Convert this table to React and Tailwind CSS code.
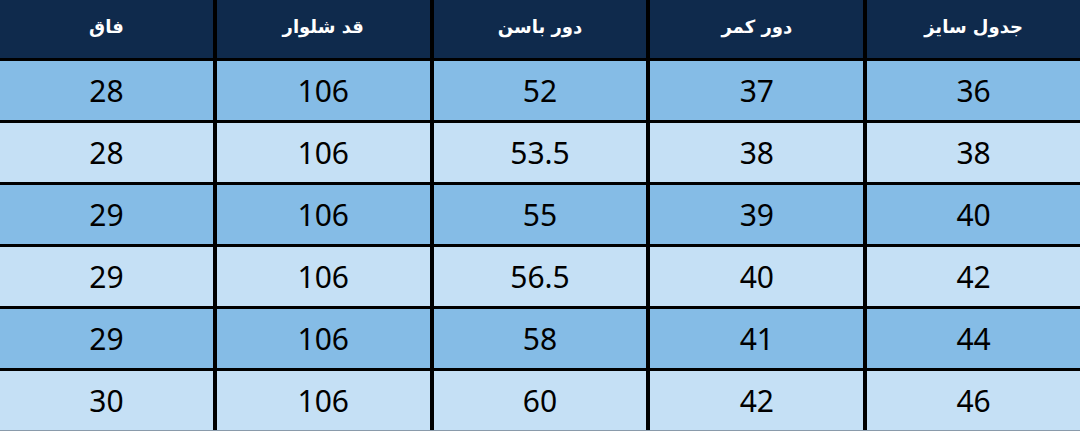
const headers = ["جدول سایز", "دور کمر", "دور باسن", "قد شلوار", "فاق"];

const rows = [
  ["36", "37", "52", "106", "28"],
  ["38", "38", "53.5", "106", "28"],
  ["40", "39", "55", "106", "29"],
  ["42", "40", "56.5", "106", "29"],
  ["44", "41", "58", "106", "29"],
  ["46", "42", "60", "106", "30"],
];

export default function App() {
  return (
    <div dir="rtl" className="w-[1080px] h-[431px] bg-black flex flex-col gap-y-[3px] border-b border-[#8a9bab]">
      <div className="grid grid-cols-5 gap-x-[4px] h-[58px]">
        {headers.map((h) => (
          <div
            key={h}
            className="bg-[#0f2a4c] text-white flex items-center justify-center font-bold text-[18px] pb-[6px]"
            style={{ fontFamily: '"DejaVu Sans", sans-serif' }}
          >
            {h}
          </div>
        ))}
      </div>
      {rows.map((r, i) => (
        <div key={i} className="grid grid-cols-5 gap-x-[4px] h-[59px]">
          {r.map((c, j) => (
            <div
              key={j}
              className={`${i % 2 === 0 ? "bg-[#85bce6]" : "bg-[#c5e0f5]"} text-black flex items-center justify-center text-[30px] font-['Noto_Sans',sans-serif]`}
            >
              {c}
            </div>
          ))}
        </div>
      ))}
    </div>
  );
}
